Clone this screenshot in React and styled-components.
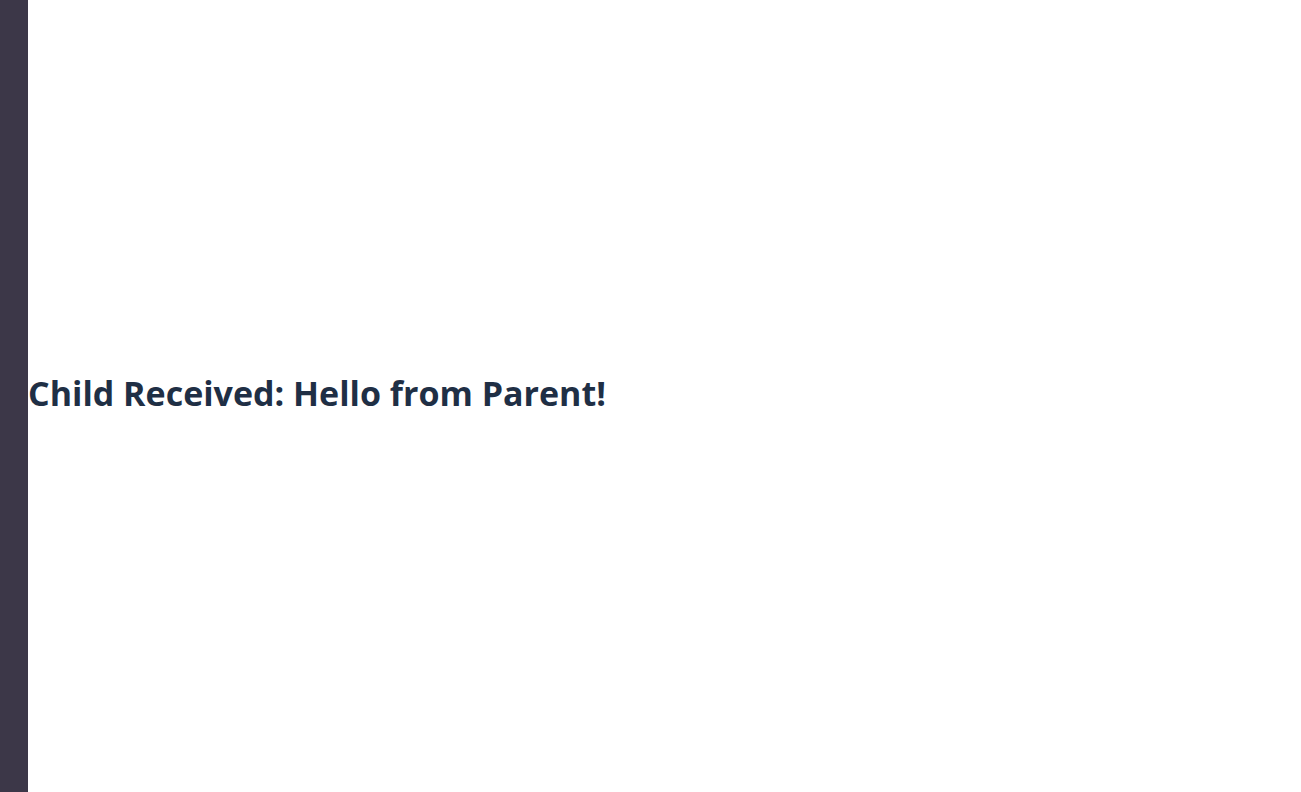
import React from "react";
import styled, { createGlobalStyle } from "styled-components";

const GlobalStyle = createGlobalStyle`
  html, body {
    margin: 0;
    padding: 0;
    height: 100%;
    background: #ffffff;
  }
  #root {
    height: 100%;
  }
`;

function Child({ message }) {
  return <Heading>Child Received: {message}</Heading>;
}

function App() {
  const message = "Hello from Parent!";
  return (
    <>
      <GlobalStyle />
      <Layout>
        <SideBar />
        <Main>
          <Child message={message} />
        </Main>
      </Layout>
    </>
  );
}

export default App;

const Layout = styled.div`
  display: flex;
  height: 100vh;
`;

const SideBar = styled.aside`
  width: 28px;
  flex-shrink: 0;
  background-color: #3c3748;
`;

const Main = styled.main`
  flex: 1;
  display: flex;
  flex-direction: column;
  justify-content: center;
  padding-bottom: 6px;
`;

const Heading = styled.h2`
  margin: 0;
  font-family: "Open Sans", "Lato", sans-serif;
  font-size: 34px;
  font-weight: 700;
  color: #1f2f45;
`;
